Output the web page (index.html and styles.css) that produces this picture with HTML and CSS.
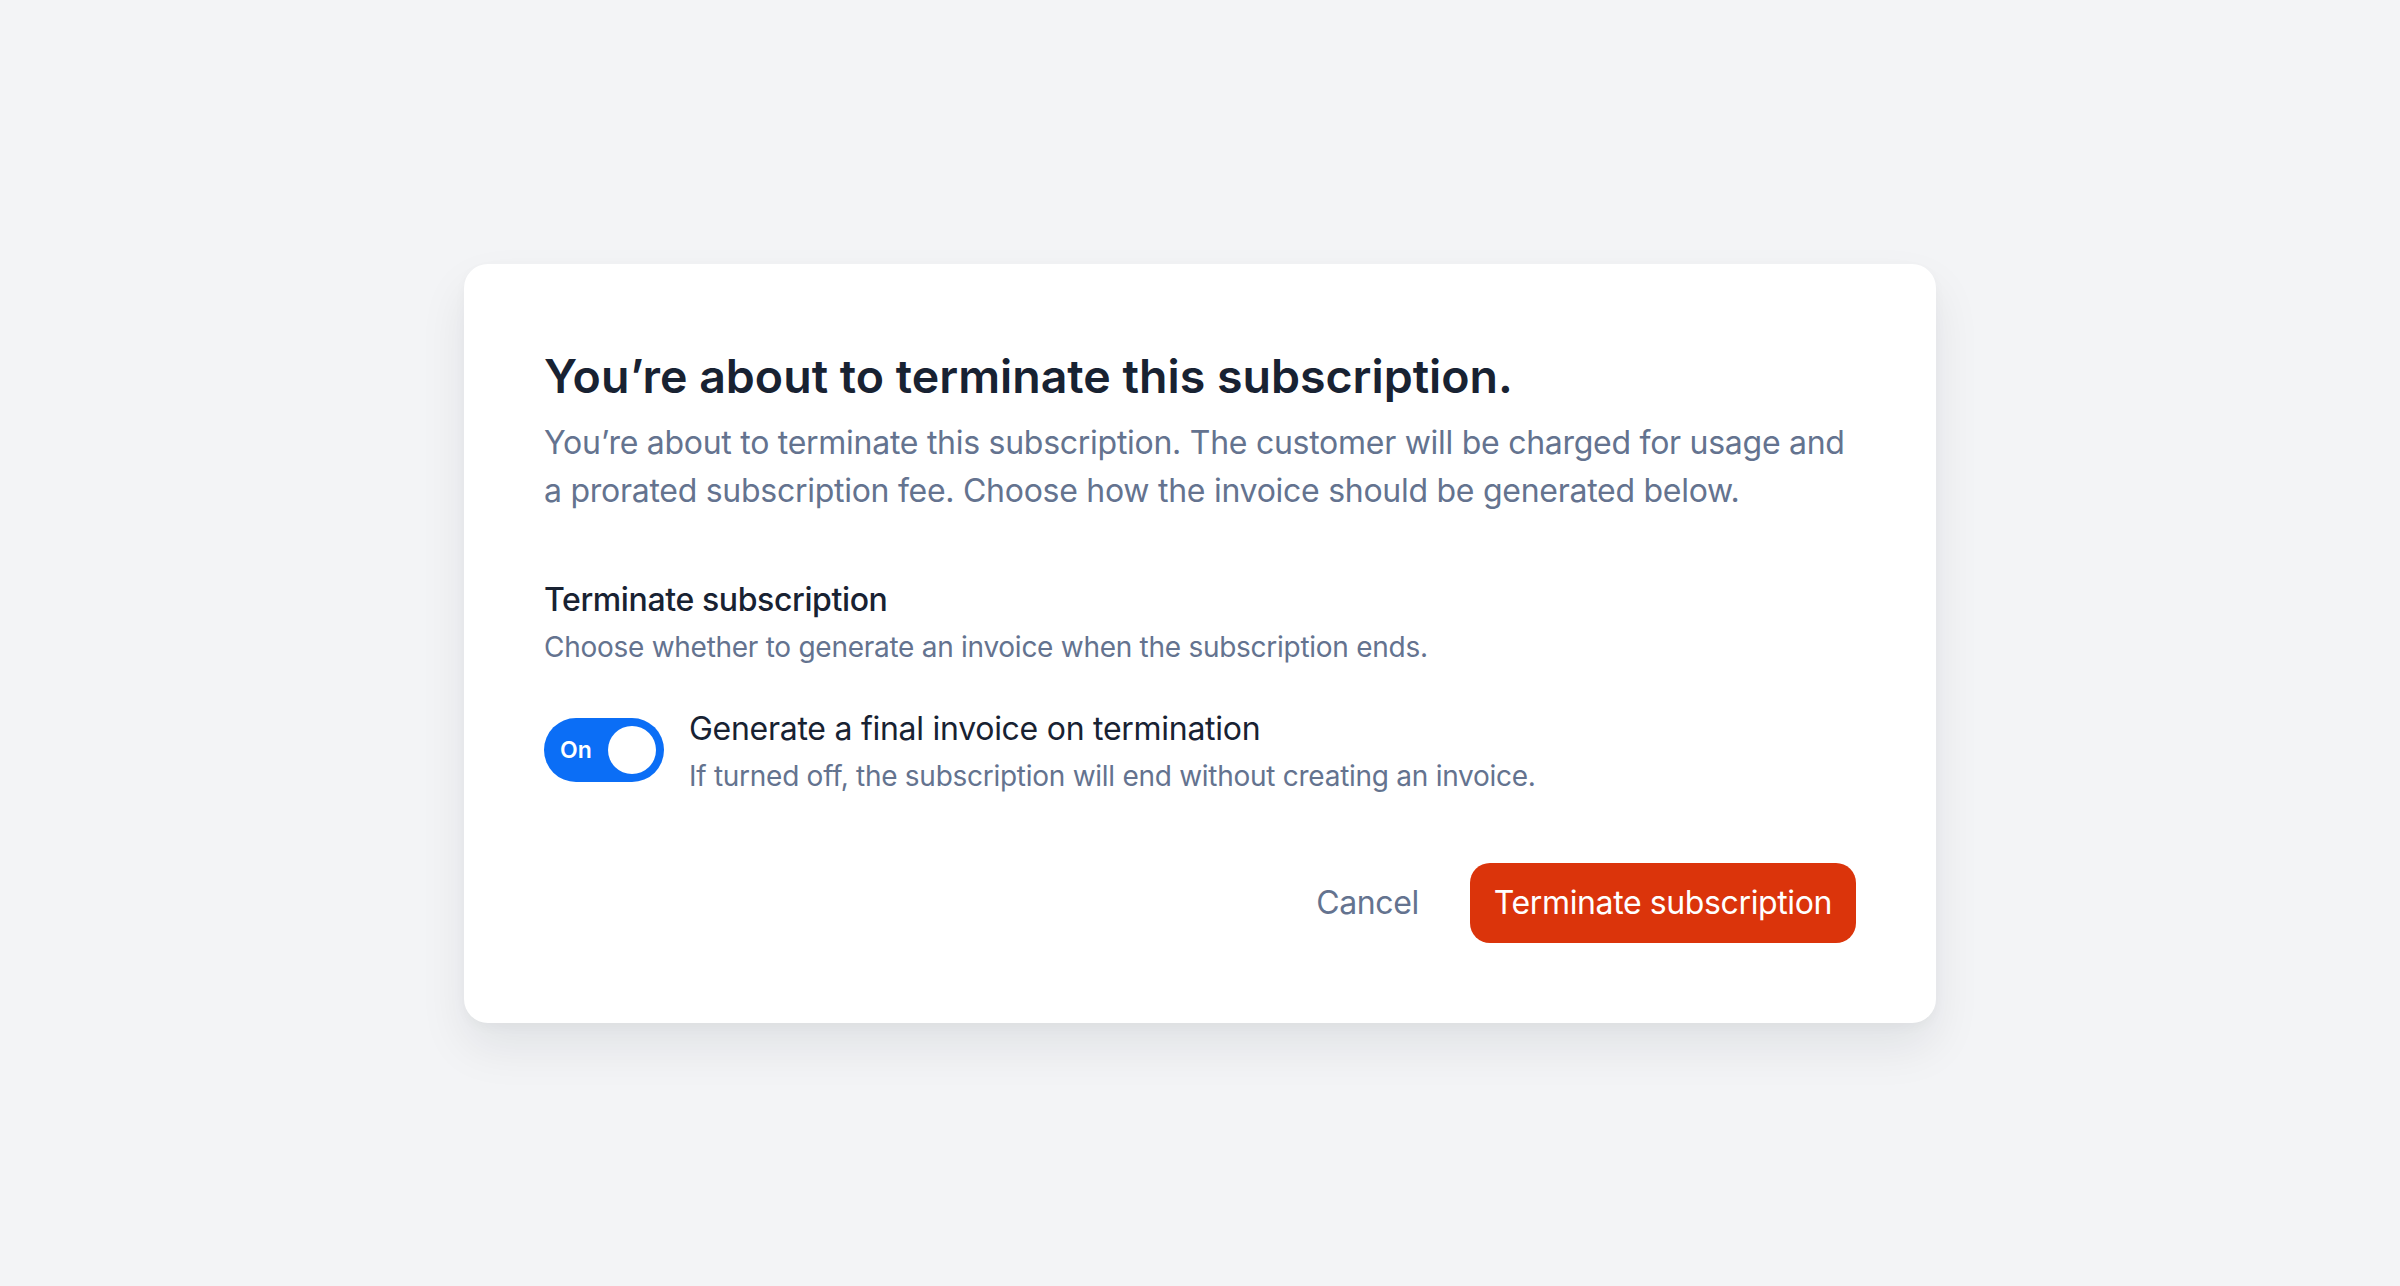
FILE: index.html
```html
<!DOCTYPE html>
<html lang="en">
<head>
<meta charset="utf-8">
<title>Terminate subscription</title>
<link rel="stylesheet" href="styles.css">
</head>
<body>
<main class="page">
  <section class="dialog" role="dialog" aria-labelledby="dlg-title">
    <h1 class="dialog-title" id="dlg-title">You’re about to terminate this subscription.</h1>
    <p class="dialog-desc">You’re about to terminate this subscription. The customer will be charged for usage and a prorated subscription fee. Choose how the invoice should be generated below.</p>

    <div class="section">
      <h2 class="section-title">Terminate subscription</h2>
      <p class="section-help">Choose whether to generate an invoice when the subscription ends.</p>
    </div>

    <div class="toggle-row">
      <button class="toggle" type="button" aria-pressed="true">
        <span class="toggle-text">On</span>
        <span class="toggle-knob"></span>
      </button>
      <div class="toggle-copy">
        <div class="toggle-label">Generate a final invoice on termination</div>
        <div class="toggle-help">If turned off, the subscription will end without creating an invoice.</div>
      </div>
    </div>

    <div class="actions">
      <button class="btn btn-ghost" type="button">Cancel</button>
      <button class="btn btn-danger" type="button">Terminate subscription</button>
    </div>
  </section>
</main>
</body>
</html>
```

FILE: styles.css
```css
* { box-sizing: border-box; }

html, body {
  margin: 0;
  padding: 0;
  height: 100%;
}

body {
  background: #f3f4f6;
  font-family: Inter, "Noto Sans", "Liberation Sans", sans-serif;
  color: #182232;
  letter-spacing: -0.017em;
}

.page {
  min-height: 100vh;
  display: flex;
  align-items: center;
  justify-content: center;
}

.dialog {
  width: 1472px;
  background: #ffffff;
  border-radius: 24px;
  padding: 80px;
  box-shadow: 0 24px 48px rgba(16, 24, 40, 0.08), 0 4px 12px rgba(16, 24, 40, 0.03);
  display: flex;
  flex-direction: column;
}

.dialog-title {
  margin: 0;
  font-size: 46.5px;
  line-height: 64px;
  font-weight: 600;
  letter-spacing: 0;
  color: #182232;
}

.dialog-desc {
  margin: 11px 0 0;
  font-size: 32px;
  line-height: 48px;
  font-weight: 400;
  color: #64738f;
}

.section {
  margin-top: 61px;
  display: flex;
  flex-direction: column;
}

.section-title {
  margin: 0;
  font-size: 32px;
  line-height: 48px;
  font-weight: 500;
  letter-spacing: -0.012em;
  color: #182232;
}

.section-help {
  margin: 3px 0 0;
  font-size: 28px;
  line-height: 40px;
  color: #64738f;
}

.toggle-row {
  margin-top: 38px;
  display: flex;
  align-items: center;
  gap: 25px;
}

.toggle {
  flex: none;
  width: 120px;
  height: 64px;
  border: 0;
  border-radius: 32px;
  background: #0b6ef6;
  padding: 0 8px 0 16px;
  display: flex;
  align-items: center;
  justify-content: space-between;
  cursor: pointer;
  font-family: inherit;
}

.toggle-text {
  color: #ffffff;
  font-size: 23px;
  font-weight: 600;
  line-height: 1;
  letter-spacing: 0;
}

.toggle-knob {
  width: 48px;
  height: 48px;
  border-radius: 50%;
  background: #ffffff;
}

.toggle-copy {
  display: flex;
  flex-direction: column;
}

.toggle-label {
  font-size: 32px;
  line-height: 48px;
  color: #182232;
}

.toggle-help {
  margin-top: 3px;
  font-size: 28px;
  line-height: 40px;
  color: #64738f;
}

.actions {
  margin-top: 67px;
  display: flex;
  justify-content: flex-end;
  gap: 27px;
}

.btn {
  height: 80px;
  padding: 0 24px;
  border: 0;
  border-radius: 20px;
  font-family: inherit;
  font-size: 32px;
  font-weight: 400;
  letter-spacing: -0.012em;
  cursor: pointer;
}

.btn-ghost {
  background: transparent;
  color: #64738f;
}

.btn-danger {
  background: #db340b;
  color: #ffffff;
}
```
